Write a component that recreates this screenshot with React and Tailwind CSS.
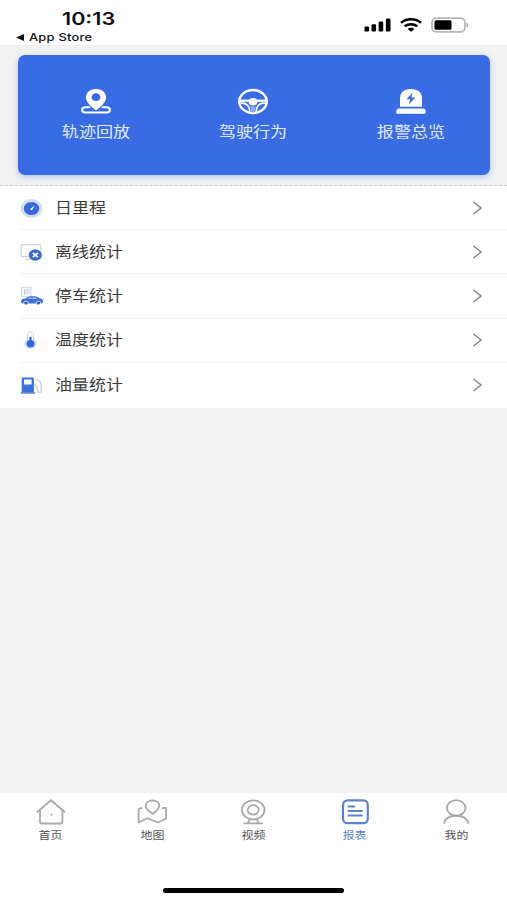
import React, { useState } from 'react';

// Icons of the blue shortcut card
function TrackIcon() {
  return (
    <svg width="32" height="28" viewBox="0 0 32 28" fill="none">
      <path d="M9.500 19.200H5.200c-4.200 0-4.200 5.200 0 5.200h21.600c4.200 0 4.200-5.200 0-5.200h-4.300" stroke="white" strokeWidth="2" strokeLinecap="round" />
      <path d="M16 22.300C11 18.500 6 14.500 6 9.200C6 4.500 10.500 1 16 1S26 4.500 26 9.200C26 14.500 21 18.500 16 22.300Z" fill="white" />
      <ellipse cx="16" cy="9.200" rx="4.400" ry="3.900" fill="#396ce4" />
    </svg>
  );
}

function WheelIcon() {
  return (
    <svg width="32" height="28" viewBox="0 0 32 28" fill="none" stroke="white">
      <ellipse cx="16" cy="13.500" rx="13.700" ry="11.500" strokeWidth="2.500" />
      <path d="M3 12.700h26" strokeWidth="2.200" />
      <path d="M4 15.200c5-.5 8.300 2 9 8.500M28 15.200c-5-.5-8.300 2-9 8.500" strokeWidth="1.600" />
      <ellipse cx="16" cy="13.700" rx="4.300" ry="3.700" fill="white" stroke="none" />
      <path d="M13.300 18.200h5.400l-.7 6h-4z" fill="#8aa9f1" stroke="none" />
    </svg>
  );
}

function AlarmIcon() {
  return (
    <svg width="32" height="28" viewBox="0 0 32 28">
      <path d="M5 18.800V10.500C5 4.500 9 1 16 1s11 3.500 11 9.500v8.300z" fill="white" />
      <path d="M3.500 20.600h25c1.300 0 2.300 1.600 2.300 3.600 0 1.200-.7 1.600-1.500 1.600H2.700c-.8 0-1.500-.4-1.500-1.600 0-2 1-3.600 2.300-3.600z" fill="white" />
      <path d="M17.500 4.700l-6 6.600h3.800l-1.500 5.200 6.600-6.900h-4z" fill="#396ce4" />
    </svg>
  );
}

// Icons of the report list
function MileageIcon() {
  return (
    <svg width="24" height="22" viewBox="0 0 24 22">
      <ellipse cx="11.500" cy="11.500" rx="10.300" ry="8.800" fill="#dbe4f5" stroke="#c3d2ee" strokeWidth="1" />
      <ellipse cx="11.500" cy="11.500" rx="7.700" ry="6.600" fill="#3669d8" />
      <path d="M10 12.300l4.800-4-2.800 5z" fill="white" />
      <path d="M6.500 11.500h1M11.500 6.500v1M15.500 11.500h1" stroke="#89aaf0" strokeWidth=".8" />
    </svg>
  );
}

function OfflineIcon() {
  return (
    <svg width="24" height="22" viewBox="0 0 24 22" fill="none">
      <path d="M5 18.300h6" stroke="#cbd1df" strokeWidth="1.400" />
      <rect x="1.200" y="3.700" width="19.600" height="12" rx="1" fill="white" stroke="#cbd1df" strokeWidth="1.200" />
      <ellipse cx="15.300" cy="14" rx="6.900" ry="5.900" fill="#3b68c8" stroke="white" strokeWidth=".6" />
      <path d="M12.700 11.800l5.200 4.400m0-4.400l-5.200 4.400" stroke="white" strokeWidth="1.600" />
    </svg>
  );
}

function ParkingIcon() {
  return (
    <svg width="24" height="22" viewBox="0 0 24 22" fill="none">
      <rect x="1.500" y="2.500" width="9.500" height="9" fill="#f1f3f7" stroke="#d5dae5" />
      <path d="M4.500 10V5h3c2 0 2 2.800 0 2.800h-3" stroke="#c3cad8" />
      <path d="M1 16.300c0-1.500 1.200-2.500 4.300-2.800 2-1.700 3.700-2.300 7.200-2.300 3.800 0 5.200.5 7.500 2.300 2.200.3 3 1.200 3 2.500v1c0 .9-.8 1.400-1.900 1.400H3.200c-1.600 0-2.200-.6-2.200-2.100z" fill="#3c70d7" />
      <path d="M7.500 13.800c1.200-1 2.400-1.400 4-1.400v1.400zm5-1.400c2.400 0 3.800.3 5 1.400h-5z" fill="#cddcf8" />
      <ellipse cx="6" cy="18" rx="2.300" ry="1.900" fill="#2c62cd" stroke="white" strokeWidth=".7" />
      <ellipse cx="18.400" cy="18" rx="2.300" ry="1.900" fill="#2c62cd" stroke="white" strokeWidth=".7" />
    </svg>
  );
}

function TemperatureIcon() {
  return (
    <svg width="24" height="22" viewBox="0 0 24 22" fill="none">
      <ellipse cx="10.500" cy="14.700" rx="6.200" ry="5.500" fill="#dbe5fb" />
      <path d="M7.500 11V5.500c0-3.700 6-3.700 6 0V11" fill="white" stroke="#ccd0d9" />
      <ellipse cx="10.500" cy="14.800" rx="4" ry="3.700" fill="#2f66dc" />
      <path d="M10.500 8.500v5" stroke="#2f66dc" strokeWidth="2.200" strokeLinecap="round" />
    </svg>
  );
}

function FuelIcon() {
  return (
    <svg width="24" height="22" viewBox="0 0 24 22" fill="none">
      <path d="M1.700 18.500V5c0-1 .5-1.500 1.500-1.500h9.200c1 0 1.500.5 1.500 1.500v13.500z" fill="#3a70e3" />
      <rect x="4" y="5.500" width="7.600" height="5" fill="white" />
      <path d="M.8 19h14.200" stroke="#2c62dc" strokeWidth="1.200" />
      <path d="M14.500 10.500c3.500-.5 2 8 4.800 8 3.100 0 2-5.500 1.700-8-.2-2-2-4.200-5-5.200" stroke="#c5d1e8" strokeWidth="1.300" />
    </svg>
  );
}

// Icons of the bottom tab bar, they inherit the colour of the tab
function HomeIcon() {
  return (
    <svg width="32" height="28" viewBox="0 0 32 28" fill="none" stroke="currentColor" strokeWidth="1.800">
      <path d="M2 14.200L16 2.300l14 11.900" />
      <path d="M5 12.300v11.400c0 1.300.6 1.800 1.900 1.800h18.600c1.300 0 1.900-.5 1.900-1.800V12.300" />
      <circle cx="16.500" cy="16.800" r="1" fill="currentColor" stroke="none" />
    </svg>
  );
}

function MapIcon() {
  return (
    <svg width="32" height="28" viewBox="0 0 32 28" fill="none" stroke="currentColor" strokeWidth="1.800" strokeLinejoin="round">
      <path d="M6.200 10.200H4.800c-1.400 0-2.200.7-2.200 1.900v12.400l8.700-4.300 10.500 4.300 8.200-3.800V9.800l-4 .4" />
      <path d="M16.500 16c-3.500-3-6.800-5-6.800-8.300 0-3.200 3-5.200 6.800-5.200s6.800 2 6.800 5.200c0 3.300-3.300 5.300-6.800 8.300z" />
    </svg>
  );
}

function CameraIcon() {
  return (
    <svg width="32" height="28" viewBox="0 0 32 28" fill="none" stroke="currentColor" strokeWidth="1.800">
      <ellipse cx="16.200" cy="11.900" rx="11.300" ry="9.600" />
      <ellipse cx="16.200" cy="11.900" rx="5.500" ry="4.700" />
      <path d="M13 21l-2.300 4.300M19.500 21l2.300 4.300M6.500 25.400h19.500" />
    </svg>
  );
}

function ReportIcon() {
  return (
    <svg width="32" height="28" viewBox="0 0 32 28" fill="none" stroke="currentColor" strokeWidth="2.200">
      <rect x="4" y="2.400" width="24.800" height="22.800" rx="4.500" />
      <path d="M8.700 8.500h7.500M8.700 13h15M8.700 17.500h15" strokeWidth="1.800" />
    </svg>
  );
}

function UserIcon() {
  return (
    <svg width="32" height="28" viewBox="0 0 32 28" fill="none" stroke="currentColor" strokeWidth="1.900">
      <ellipse cx="16.200" cy="9.900" rx="9.300" ry="7.800" />
      <path d="M4 25.700c1-5.500 5.500-8 12.200-8s11.200 2.500 12.200 8" />
    </svg>
  );
}

const shortcuts = [
  { label: '轨迹回放', icon: TrackIcon },
  { label: '驾驶行为', icon: WheelIcon },
  { label: '报警总览', icon: AlarmIcon },
];

const reports = [
  { label: '日里程', icon: MileageIcon },
  { label: '离线统计', icon: OfflineIcon },
  { label: '停车统计', icon: ParkingIcon },
  { label: '温度统计', icon: TemperatureIcon },
  { label: '油量统计', icon: FuelIcon },
];

const tabs = [
  { id: 'home', label: '首页', icon: HomeIcon },
  { id: 'map', label: '地图', icon: MapIcon },
  { id: 'video', label: '视频', icon: CameraIcon },
  { id: 'report', label: '报表', icon: ReportIcon },
  { id: 'mine', label: '我的', icon: UserIcon },
];

function StatusBar() {
  return (
    <div className="flex h-[45px] shrink-0 justify-between bg-white text-[#111]">
      <div className="pl-4 pt-[9px]">
        <div className="ml-[46px] h-5 w-fit origin-left scale-x-[1.27] text-[17px] font-semibold leading-5">10:13</div>
        <div className="flex h-4 items-center gap-[5px]">
          <svg width="8" height="7" viewBox="0 0 8 7">
            <path d="M8 0v7L0 3.500z" fill="#111" />
          </svg>
          <span className="origin-left scale-x-[1.17] text-[11px] font-medium leading-4 tracking-[0.2px]">App Store</span>
        </div>
      </div>
      <div className="flex h-[50px] items-center gap-[9px] pr-[38px]">
        <svg width="27" height="14" viewBox="0 0 27 14">
          <rect x="0.500" y="8.500" width="4.600" height="5" rx="1.200" />
          <rect x="7.500" y="6.200" width="4.600" height="7.300" rx="1.200" />
          <rect x="14.600" y="3.500" width="4.600" height="10" rx="1.200" />
          <rect x="21.900" y="0.500" width="4.600" height="13" rx="1.200" />
        </svg>
        <svg width="22" height="14" viewBox="0 0 22 14" fill="none" stroke="black" strokeWidth="2.600">
          <path d="M1 4.700c5.700-4.600 14.300-4.600 20 0M4.700 8.300c3.600-2.800 9-2.800 12.600 0" />
          <path d="M7.600 10.900c2-1.500 4.800-1.500 6.800 0L11 13.800z" fill="black" stroke="none" />
        </svg>
        <svg width="38" height="16" viewBox="0 0 38 16">
          <rect x="1" y="1.200" width="33" height="13.600" rx="4.200" fill="white" stroke="#b8b8b8" strokeWidth="1.800" />
          <rect x="3.500" y="3.300" width="17" height="9.400" rx="1.500" fill="black" />
          <path d="M35.500 5.500c2.400.8 2.400 4 0 4.800z" fill="#a5a5a5" />
        </svg>
      </div>
    </div>
  );
}

function App() {
  const [activeTab, setActiveTab] = useState('report');

  return (
    <div className="flex h-[900px] w-[507px] flex-col overflow-hidden bg-[#f2f2f2] font-[Inter,'Noto_Sans_CJK_SC',sans-serif]">
      <StatusBar />

      {/* Shortcut card */}
      <div className="h-[141px] shrink-0 border-b border-dashed border-[#cdcdcd] bg-[#f2f2f3] pl-[18px] pr-[17px] pt-[10px]">
        <div className="grid h-[120px] grid-cols-3 rounded-[7px] bg-[#396ce4] shadow-[0_2px_6px_rgba(57,108,228,0.35)]">
          {shortcuts.map(({ label, icon: Icon }) => (
            <button key={label} className="-ml-px flex flex-col items-center pt-[33px]">
              <Icon />
              <span className="mt-[5px] scale-x-[1.18] text-[14.5px] leading-[22px] text-[#e2eafc]">{label}</span>
            </button>
          ))}
        </div>
      </div>

      {/* Report list */}
      <div className="h-[222px] shrink-0 bg-white">
        {reports.map(({ label, icon: Icon }, index) => (
          <div key={label} className="h-[44.2px] pl-5">
            <div className={`flex h-full items-center pr-6 ${index < reports.length - 1 ? 'border-b border-[#f4f4f5]' : ''}`}>
              <Icon />
              <span className="ml-[11px] origin-left scale-x-[1.17] text-[14.5px] leading-[22px] text-[#3a3a3a]">{label}</span>
              <svg className="ml-auto" width="11" height="14" viewBox="0 0 11 14" fill="none" stroke="#8a8a8a" strokeWidth="1.600">
                <path d="M1.500 1l7.500 6-7.500 6" />
              </svg>
            </div>
          </div>
        ))}
      </div>

      <div className="flex-1" />

      {/* Bottom tabs */}
      <div className="flex h-[107px] shrink-0 flex-col items-center justify-between bg-white pb-[7px]">
        <div className="grid w-full grid-cols-5 pt-[5px]">
          {tabs.map(({ id, label, icon: Icon }) => (
            <button
              key={id}
              onClick={() => setActiveTab(id)}
              className={`flex flex-col items-center ${activeTab === id ? 'text-[#5b82d2]' : 'text-[#aaaaaa]'}`}
            >
              <Icon />
              <span className={`mt-[2px] scale-x-[1.14] text-[10.5px] leading-4 ${activeTab === id ? 'text-[#5b82d2]' : 'text-[#555]'}`}>{label}</span>
            </button>
          ))}
        </div>
        <div className="h-[5px] w-[181px] rounded-full bg-black" />
      </div>
    </div>
  );
}

export default App;
